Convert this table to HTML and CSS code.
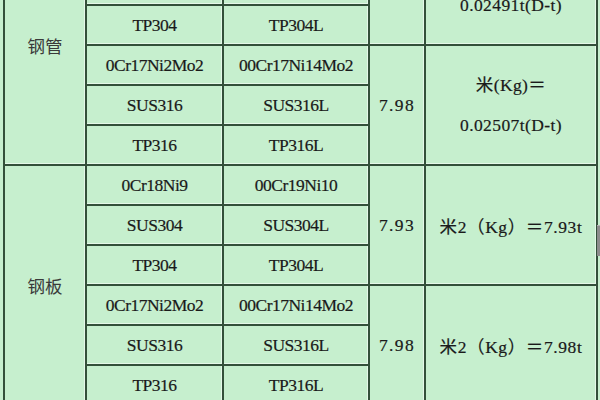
FILE: index.html
```html
<!DOCTYPE html>
<html lang="zh">
<head>
<meta charset="utf-8">
<title>不锈钢重量计算</title>
<link rel="stylesheet" href="styles.css">
</head>
<body>
<div class="page">
  <div class="sheet">
    <div class="cell grp">钢管</div>
    <div class="cell c2">0Cr18Ni9</div>
    <div class="cell c3">00Cr19Ni10</div>
    <div class="cell den">7.93</div>
    <div class="cell f two">米(Kg)＝<br>0.02491t(D-t)</div>
    <div class="cell c2">SUS304</div>
    <div class="cell c3">SUS304L</div>
    <div class="cell c2">TP304</div>
    <div class="cell c3">TP304L</div>
    <div class="cell c2">0Cr17Ni2Mo2</div>
    <div class="cell c3">00Cr17Ni14Mo2</div>
    <div class="cell den">7.98</div>
    <div class="cell f two">米(Kg)＝<br>0.02507t(D-t)</div>
    <div class="cell c2">SUS316</div>
    <div class="cell c3">SUS316L</div>
    <div class="cell c2">TP316</div>
    <div class="cell c3">TP316L</div>

    <div class="cell grp">钢板</div>
    <div class="cell c2">0Cr18Ni9</div>
    <div class="cell c3">00Cr19Ni10</div>
    <div class="cell den">7.93</div>
    <div class="cell f one">米2（Kg）＝7.93t</div>
    <div class="cell c2">SUS304</div>
    <div class="cell c3">SUS304L</div>
    <div class="cell c2">TP304</div>
    <div class="cell c3">TP304L</div>
    <div class="cell c2">0Cr17Ni2Mo2</div>
    <div class="cell c3">00Cr17Ni14Mo2</div>
    <div class="cell den">7.98</div>
    <div class="cell f one">米2（Kg）＝7.98t</div>
    <div class="cell c2">SUS316</div>
    <div class="cell c3">SUS316L</div>
    <div class="cell c2">TP316</div>
    <div class="cell c3">TP316L</div>
  </div>
  <div class="side-tab"></div>
</div>
</body>
</html>
```
FILE: styles.css
```css
html, body {
  margin: 0;
  padding: 0;
  background: #c6efce;
  overflow: hidden;
}
.page {
  position: relative;
  width: 600px;
  height: 400px;
  overflow: hidden;
}
.sheet {
  margin-top: -76px;
  margin-left: 3px;
  display: grid;
  grid-template-columns: 82px 137px 146px 56px 172px;
  grid-auto-rows: 40px;
  width: 593px;
  box-sizing: border-box;
  border-left: 2px solid #33503a;
  border-top: 2px solid #33503a;
  font-family: "Liberation Serif", "Noto Sans CJK SC", serif;
  font-size: 17.5px;
  color: #1a1a1a;
  -webkit-text-stroke: 0.2px currentColor;
}
.cell {
  box-sizing: border-box;
  border-right: 2px solid #33503a;
  border-bottom: 2px solid #33503a;
  box-shadow: inset -1px -1px 0 rgba(255, 255, 255, 0.55);
  display: flex;
  align-items: center;
  justify-content: center;
  text-align: center;
  letter-spacing: -0.5px;
  white-space: nowrap;
}
.grp {
  grid-column: 1;
  grid-row: span 6;
  font-family: "Noto Sans CJK SC", sans-serif;
  font-size: 17.5px;
  color: #3a3a3a;
  letter-spacing: 0;
  -webkit-text-stroke: 0;
}
.c2 { grid-column: 2; }
.c3 { grid-column: 3; }
.den {
  grid-column: 4;
  grid-row: span 3;
  letter-spacing: 1.4px;
}
.f {
  grid-column: 5;
  grid-row: span 3;
}
.two {
  line-height: 40px;
  letter-spacing: 0.4px;
}
.one {
  letter-spacing: 0.6px;
}
.side-tab {
  position: absolute;
  right: 0;
  top: 225px;
  width: 3px;
  height: 30px;
  background: #8c8c8c;
  border-top: 1px solid #b5b5b5;
}
```
